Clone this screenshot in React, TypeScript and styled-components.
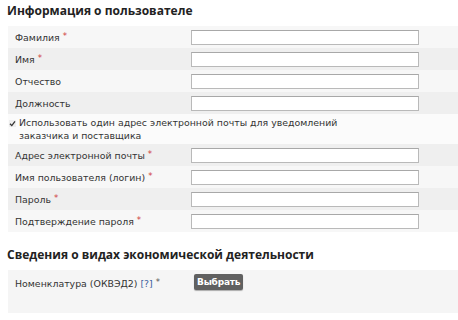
import styled, { createGlobalStyle } from 'styled-components';

const GlobalStyle = createGlobalStyle`
  body {
    margin: 0;
    background: #ffffff;
    font-family: "DejaVu Sans", Verdana, sans-serif;
    color: #333333;
  }
`;

const Page = styled.div`
  width: 458px;
  overflow: hidden;
  padding: 2px 0 0 8px;
  box-sizing: border-box;
`;

const SectionTitle = styled.h2<{ $top?: number }>`
  margin: ${p => p.$top ?? 0}px 0 0 -1px;
  height: 24px;
  line-height: 18px;
  font-family: "Open Sans", sans-serif;
  font-weight: 700;
  font-size: 12px;
  color: #222222;
`;

const Table = styled.div`
  display: flex;
  flex-direction: column;
  width: 470px;
`;

const Row = styled.div<{ $dark?: boolean }>`
  display: grid;
  grid-template-columns: 183px 228px;
  align-items: center;
  height: 22px;
  background: ${p => (p.$dark ? '#efefef' : '#f7f7f7')};
`;

const Label = styled.label`
  padding-left: 7px;
  font-size: 9.4px;
  color: #333333;
  white-space: nowrap;
`;

const Req = styled.span<{ $plain?: boolean }>`
  margin-left: 3px;
  font-size: 8.5px;
  vertical-align: 2px;
  color: ${p => (p.$plain ? '#555555' : '#d04040')};
`;

const Input = styled.input`
  box-sizing: border-box;
  width: 228px;
  height: 15px;
  margin: 0;
  padding: 0 3px;
  border: 1px solid #b9b9b9;
  border-top-color: #a8a8a8;
  background: #ffffff;
`;

const CheckRow = styled.div`
  display: flex;
  align-items: flex-start;
  gap: 3px;
  height: 30px;
  padding-top: 2px;
  box-sizing: border-box;
  background: #fbfbfb;
  font-size: 9.4px;
  line-height: 13px;
  color: #333333;
`;

const Check = styled.span`
  flex: none;
  width: 7px;
  height: 7px;
  margin: 4px 0 0 1px;
  display: flex;
  align-items: center;
  justify-content: center;
  background: #eeeeee;
`;

const CheckText = styled.span`
  width: 330px;
`;

const Box = styled.div`
  display: grid;
  grid-template-columns: 186px auto;
  align-items: start;
  height: 43px;
  padding-top: 4px;
  box-sizing: border-box;
  width: 470px;
  background: #f5f5f5;
`;

const BoxLabel = styled(Label)`
  padding-top: 3px;
`;

const Help = styled.a`
  color: #3b5f9c;
  text-decoration: none;
`;

const Button = styled.button`
  justify-self: start;
  height: 16px;
  padding: 0 3px;
  border: none;
  border-radius: 2px;
  background: #606060;
  color: #ffffff;
  font-family: "DejaVu Sans", Verdana, sans-serif;
  font-weight: 700;
  font-size: 9px;
  line-height: 16px;
  letter-spacing: -0.2px;
  box-shadow: 0 1px 1px rgba(0, 0, 0, 0.3);
`;

const firstRows = [
  { label: 'Фамилия', req: true },
  { label: 'Имя', req: true },
  { label: 'Отчество', req: false },
  { label: 'Должность', req: false },
];

const secondRows = [
  { label: 'Адрес электронной почты', type: 'text' },
  { label: 'Имя пользователя (логин)', type: 'text' },
  { label: 'Пароль', type: 'password' },
  { label: 'Подтверждение пароля', type: 'password' },
];

export default function App() {
  return (
    <>
      <GlobalStyle />
      <Page>
        <SectionTitle>Информация о пользователе</SectionTitle>
        <Table>
          {firstRows.map((r, i) => (
            <Row key={r.label} $dark={i % 2 === 1}>
              <Label>
                {r.label}
                {r.req && <Req>*</Req>}
              </Label>
              <Input type="text" />
            </Row>
          ))}
          <CheckRow>
            <Check>
              <svg width="7" height="7" viewBox="0 0 7 7">
                <path d="M1 3.8 L2.8 5.6 L6 1.4" fill="none" stroke="#333" strokeWidth="1.3" />
              </svg>
            </Check>
            <CheckText>
              Использовать один адрес электронной почты для уведомлений заказчика и поставщика
            </CheckText>
          </CheckRow>
          {secondRows.map((r, i) => (
            <Row key={r.label} $dark={i % 2 === 0}>
              <Label>
                {r.label}
                <Req>*</Req>
              </Label>
              <Input type={r.type} />
            </Row>
          ))}
        </Table>
        <SectionTitle $top={14}>Сведения о видах экономической деятельности</SectionTitle>
        <Box>
          <BoxLabel>
            Номенклатура (ОКВЭД2) <Help href="#">[?]</Help>
            <Req $plain>*</Req>
          </BoxLabel>
          <Button>Выбрать</Button>
        </Box>
      </Page>
    </>
  );
}
